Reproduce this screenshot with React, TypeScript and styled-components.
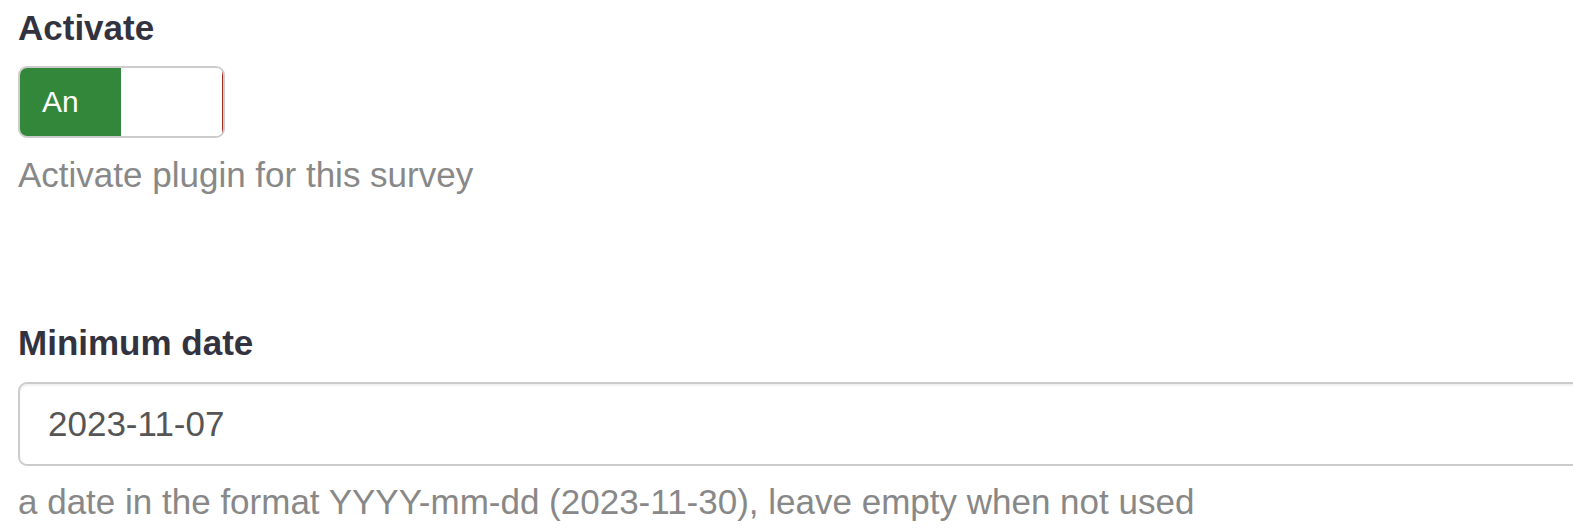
import React from "react";
import styled, { createGlobalStyle } from "styled-components";

const GlobalStyle = createGlobalStyle`
  html, body {
    margin: 0;
    padding: 0;
    background: #ffffff;
    overflow: hidden;
  }
  body {
    font-family: "Liberation Sans", Arial, Helvetica, sans-serif;
  }
`;

const StyledPage = styled.div`
  display: flex;
  flex-direction: column;
  padding: 3px 0 0 18px;
`;

const StyledGroup = styled.div<{ $gap?: number }>`
  display: flex;
  flex-direction: column;
  align-items: flex-start;
  margin-bottom: ${(p) => p.$gap ?? 0}px;
`;

const StyledLabel = styled.label<{ $spacing: number }>`
  color: #333340;
  font-size: 35px;
  font-weight: 700;
  line-height: 50px;
  margin-bottom: ${(p) => p.$spacing}px;
`;

const StyledHelp = styled.div<{ $top: number }>`
  color: #888888;
  font-size: 35px;
  line-height: 50px;
  margin-top: ${(p) => p.$top}px;
  white-space: nowrap;
`;

const StyledSwitch = styled.div`
  display: flex;
  width: 207px;
  height: 72px;
  box-sizing: border-box;
  border: 2px solid #cccccc;
  border-radius: 9px;
  overflow: hidden;
  background: #ffffff;
`;

const StyledSwitchOn = styled.span`
  display: flex;
  align-items: center;
  width: 101px;
  padding-left: 22px;
  box-sizing: border-box;
  background: #32873a;
  color: #ffffff;
  font-size: 30px;
`;

const StyledSwitchHandle = styled.span`
  flex: 1;
  background: #ffffff;
`;

const StyledSwitchOff = styled.span`
  width: 1.5px;
  background: #9c2e22;
`;

const StyledInput = styled.input`
  width: 1620px;
  height: 84px;
  box-sizing: border-box;
  border: 2px solid #cccccc;
  border-radius: 9px;
  padding: 0 28px;
  color: #555555;
  font-family: "Liberation Sans", Arial, Helvetica, sans-serif;
  font-size: 35px;
  background: #ffffff;
  box-shadow: inset 0 2px 2px rgba(0, 0, 0, 0.06);
  outline: none;
`;

const App: React.FC = () => {
  return (
    <>
      <GlobalStyle />
      <StyledPage>
        <StyledGroup $gap={118}>
          <StyledLabel $spacing={13}>Activate</StyledLabel>
          <StyledSwitch>
            <StyledSwitchOn>An</StyledSwitchOn>
            <StyledSwitchHandle />
            <StyledSwitchOff />
          </StyledSwitch>
          <StyledHelp $top={12}>Activate plugin for this survey</StyledHelp>
        </StyledGroup>

        <StyledGroup>
          <StyledLabel $spacing={14}>Minimum date</StyledLabel>
          <StyledInput type="text" defaultValue="2023-11-07" readOnly />
          <StyledHelp $top={11}>
            a date in the format YYYY-mm-dd (2023-11-30), leave empty when not used
          </StyledHelp>
        </StyledGroup>
      </StyledPage>
    </>
  );
};

export default App;
